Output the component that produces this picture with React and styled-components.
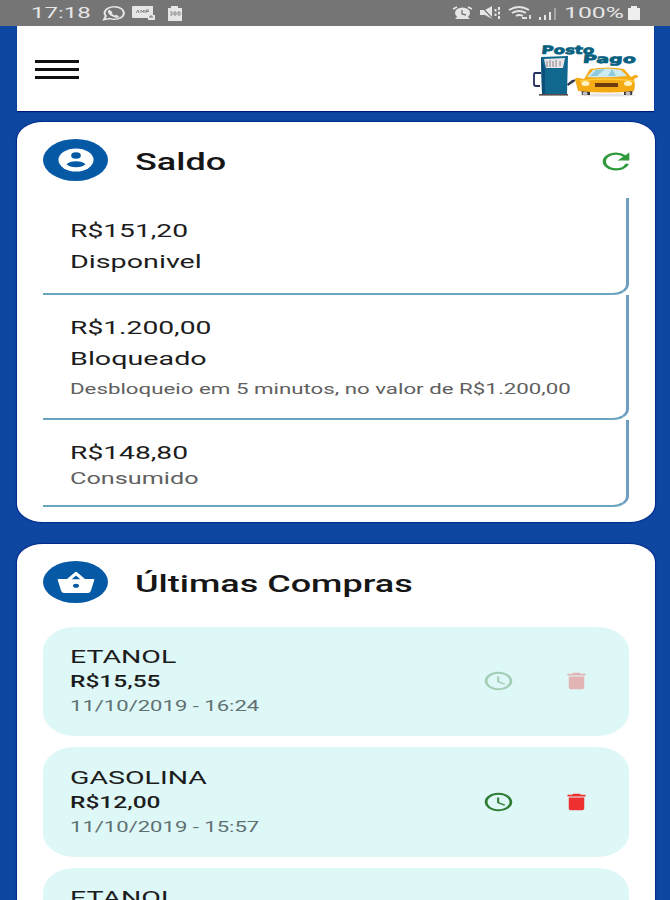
import React from 'react';
import styled, { createGlobalStyle } from 'styled-components';
import { MdAccessTime, MdDelete, MdRefresh } from 'react-icons/md';

const GlobalStyle = createGlobalStyle`
  * {
    box-sizing: border-box;
  }

  body {
    background-color: #0d47a1;
    font-family: Roboto, sans-serif;
    margin: 0;
  }
`;

const Screen = styled.div`
  background-color: #0d47a1;
  height: 900px;
  overflow: hidden;
  width: 670px;
`;

const StatusBar = styled.div`
  align-items: center;
  background-color: #757575;
  color: #e6e6e6;
  display: flex;
  height: 26px;
  justify-content: space-between;
  padding: 0 29px 0 31px;
`;

const StatusGroup = styled.div`
  align-items: center;
  display: flex;
`;

const StatusText = styled.span`
  display: block;
  font-size: 15px;
  line-height: 26px;
  margin-left: ${props => props.$gap || 0}px;
  transform: scaleX(${props => props.$stretch});
  transform-origin: left center;
  white-space: nowrap;
  width: ${props => props.$width}px;
`;

const StatusIcon = styled.svg`
  display: block;
  margin-left: ${props => props.$gap || 0}px;
`;

const Header = styled.header`
  align-items: center;
  background-color: #fff;
  box-shadow: 0 1px 1px #00187c;
  display: flex;
  height: 85px;
  justify-content: space-between;
  margin: 0 16px 11px 17px;
  padding: 0 16px 0 18px;
`;

const MenuButton = styled.button`
  background: none;
  border: none;
  display: grid;
  gap: 5px;
  margin-top: 2px;
  padding: 0;
  width: 44px;
`;

const MenuLine = styled.span`
  background-color: #111;
  height: 3px;
`;

const Card = styled.section`
  background-color: #fff;
  border-radius: 26px / 18px;
  box-shadow: 0 0 1px 1px #04288c;
  height: 400px;
  margin: 0 15px 22px 17px;
  padding: 17px 26px 0;
`;

const CardHeader = styled.div`
  align-items: center;
  display: flex;
  height: 43px;
  margin-bottom: ${props => props.$after}px;
`;

const Badge = styled.div`
  align-items: center;
  background-color: #0559a5;
  border-radius: 50%;
  display: flex;
  height: 42px;
  justify-content: center;
  margin-right: 27px;
  margin-top: -1px;
  width: 65px;
`;

const Title = styled.h2`
  color: #161616;
  flex: 1;
  font-size: 24px;
  font-weight: 500;
  line-height: 43px;
  margin: 4px 0 0;
  transform: scaleX(1.5);
  transform-origin: left center;
  white-space: nowrap;
`;

const RefreshButton = styled.button`
  background: none;
  border: none;
  color: #2e9a3c;
  display: block;
  height: 27px;
  margin-right: -7px;
  margin-top: 1px;
  padding: 0;
`;

const BalanceRow = styled.div`
  border-bottom: 2px solid #6aa5bf;
  border-bottom-right-radius: 16px 11px;
  border-right: 3px solid #6e9fc0;
  height: ${props => props.$height}px;
  padding: 17px 0 0 26.5px;
`;

const Line = styled.p`
  color: ${props => props.$color || '#1c1c1c'};
  font-size: ${props => props.$size || 19}px;
  font-weight: ${props => props.$weight || 400};
  line-height: ${props => props.$line || 31}px;
  margin: 0;
  transform: scaleX(${props => props.$stretch || 1.51});
  transform-origin: left center;
  white-space: nowrap;
  width: 300px;
`;

const PurchaseList = styled.div`
  display: grid;
  gap: 11px;
`;

const Purchase = styled.div`
  align-items: center;
  background-color: #def7f7;
  border-radius: 32px / 24px;
  display: flex;
  height: 109.5px;
  justify-content: space-between;
  padding: 0 37px 0 26.5px;
`;

const PurchaseText = styled.div`
  align-self: flex-start;
  padding-top: 18.5px;
`;

const Actions = styled.div`
  align-items: center;
  display: flex;
  gap: 46px;
  opacity: ${props => (props.$disabled ? 0.33 : 1)};
`;

const ActionIcon = styled.span`
  color: ${props => props.$color};
  display: block;
  height: 22px;
`;

const Icon = ({ as: Glyph, width, height }) => (
  <Glyph
    preserveAspectRatio="none"
    style={{ width, height, display: 'block' }}
  />
);

const AccountIcon = () => (
  <svg width="36" height="24" viewBox="0 0 36 24">
    <ellipse cx="18" cy="12" rx="17.500" ry="11.500" fill="#fff" />
    <ellipse cx="18" cy="7.500" rx="4.800" ry="3.300" fill="#0559a5" />
    <path d="M8.500 16.300q3-3 9.500-3t9.500 3q-3 3-9.500 3t-9.500-3z" fill="#0559a5" />
  </svg>
);

const BasketIcon = () => (
  <svg width="38" height="24" viewBox="0 0 38 24">
    <path d="M1.500 9h8.500L18 2.200q1-.8 2 0L28 9h8.500q1 0 .8 1l-3.500 11q-.6 2-3 2H7.200q-2.400 0-3-2L.7 10q-.2-1 .8-1z" fill="#fff" />
    <path d="M14.800 9.200L19 5.500l4.200 3.700z" fill="#0559a5" />
    <ellipse cx="19" cy="15.800" rx="3" ry="2" fill="#0559a5" />
  </svg>
);

const Logo = () => (
  <svg width="108" height="58" viewBox="530 40 108 58">
    {/* pump */}
    <path d="M541 73h-6q-1 0-1 2v9q0 2 2 2h4" fill="none" stroke="#23305e" strokeWidth="1.8" />
    <path d="M541 57l27-1-1 38h-25z" fill="#10688f" />
    <path d="M541 57l4 12v25h-3z" fill="#0c4f78" />
    <path d="M544 59l21-1-2 10h-17z" fill="#e9e6e8" />
    <path d="M547 61v6M550 60v7M553 61v6M556 60v7M560 61v5" stroke="#9a9298" strokeWidth="1.2" />
    <path d="M539 94h29v1.600h-29z" fill="#5d4a4a" />
    <path d="M567 84l5-4 5-1-3 3-6 4z" fill="#333c50" />
    {/* car */}
    <ellipse cx="607" cy="95" rx="29" ry="1.600" fill="#e4e4e4" />
    <path d="M581 88h9v7h-8zM624 88h9l-1 7h-8z" fill="#3b3340" />
    <path d="M575 80q0-3 4-2l5 1 6-10q18-3 34 0l7 8 4-2q4 0 3 2l-4 2 1 6-1 6q-26 3-56 0l-2-8z" fill="#f5ab14" />
    <path d="M587 77l6-7q13-3 28 0l6 6q-19 2-40 1z" fill="#cdeaf0" />
    <path d="M596 70l9-1-8 7h-7zM612 69l4 7h-8z" fill="#8fcbdc" />
    <path d="M580 81q25-4 54 0" fill="none" stroke="#ffcb3d" strokeWidth="1.500" />
    <ellipse cx="585.500" cy="83.500" rx="4" ry="2.500" fill="#fff3c4" />
    <ellipse cx="628" cy="83.500" rx="4" ry="2.500" fill="#fff3c4" />
    <path d="M595 83h23v4h-23z" fill="#6d3b10" />
    <ellipse cx="585" cy="93.500" rx="2.500" ry="2" fill="#bbb" />
    <ellipse cx="628" cy="93.500" rx="2.500" ry="2" fill="#bbb" />
    <g fill="#08617f" fontFamily="DejaVu Sans" fontSize="11.500" fontWeight="700" stroke="#08617f" strokeWidth="0.700">
      <text transform="translate(541 53.500) skewX(-6)" textLength="53" lengthAdjust="spacingAndGlyphs">Posto</text>
      <text transform="translate(582.500 63) skewX(-6)" textLength="53" lengthAdjust="spacingAndGlyphs">Pago</text>
    </g>
  </svg>
);

const StatusBarContent = () => (
  <StatusBar>
    <StatusGroup>
      <StatusText $stretch={1.6} $width={71}>17:18</StatusText>
      <StatusIcon width="23" height="15" viewBox="0 0 24 24" preserveAspectRatio="none">
        <path d="M2 22l2-6a10 10 0 1 1 4 4z" fill="none" stroke="#e6e6e6" strokeWidth="2.200" />
        <path d="M8 6l3 4-1 2 3 3 2-1 3 3q-2 3-5 1-6-3-7-9 0-2 2-3z" fill="#e6e6e6" />
      </StatusIcon>
      <StatusIcon $gap={7} width="24" height="14" viewBox="0 0 24 14">
        <path d="M1 0h20v9h2v5h-7v-2H1q-1 0-1-1V1q0-1 1-1z" fill="#e6e6e6" />
        <path d="M4 7l2-3 1 3M9 7V4l2 2 1-2v3M14 7V4h3M14 5.500h3" fill="none" stroke="#858585" />
        <path d="M18 12v-2h2v2" fill="none" stroke="#757575" />
      </StatusIcon>
      <StatusIcon $gap={11} width="16" height="15" viewBox="0 0 16 15">
        <path d="M4 2V0h7v2h4v13H1V2z" fill="#e6e6e6" />
        <path d="M3 6h2v3H3M7 6h2v3H7zM11 6h2v3h-2z" fill="none" stroke="#8a8a8a" />
      </StatusIcon>
    </StatusGroup>
    <StatusGroup>
      <StatusIcon width="21" height="14" viewBox="0 0 21 14">
        <path d="M1 3l4-2M20 3l-4-2" stroke="#e6e6e6" strokeWidth="1.800" />
        <ellipse cx="10.500" cy="7" rx="7.500" ry="5.500" fill="#e6e6e6" />
        <path d="M3 13l3-3h9l3 3z" fill="#e6e6e6" />
        <path d="M10 4v4l4 1" fill="none" stroke="#757575" strokeWidth="1.300" />
      </StatusIcon>
      <StatusIcon $gap={7} width="21" height="14" viewBox="0 0 21 14">
        <path d="M0 4h5l7-4v13l-7-4H0z" fill="#e6e6e6" />
        <path d="M1 0l12 13" stroke="#757575" strokeWidth="1.200" />
        <path d="M15.500 3v2.500M15.500 7.500V10M19 1v3M19 5.500v3M19 10v3" fill="none" stroke="#e6e6e6" strokeWidth="2" />
      </StatusIcon>
      <StatusIcon $gap={7} width="25" height="14" viewBox="0 0 25 14">
        <path d="M1 4q10-6 20 0M4 7q7-4 14 0M8 10q3-2 7 0" fill="none" stroke="#e6e6e6" strokeWidth="1.900" />
        <path d="M14 12h5M22 9v4" stroke="#e6e6e6" strokeWidth="1.800" />
      </StatusIcon>
      <StatusIcon $gap={6} width="18" height="13" viewBox="0 0 18 13">
        <path d="M1 13v-3M6 13V8M11 13V5" stroke="#e6e6e6" strokeWidth="2" />
        <path d="M16 13V1" stroke="#a5a5a5" strokeWidth="2" />
      </StatusIcon>
      <StatusText $gap={7} $stretch={1.65} $width={63}>100%</StatusText>
      <StatusIcon width="14" height="14" viewBox="0 0 14 14">
        <path d="M4 2V0h6v2h3v12H1V2z" fill="#efefef" />
      </StatusIcon>
    </StatusGroup>
  </StatusBar>
);

const balances = [
  {
    value: 'R$151,20',
    label: 'Disponivel',
    height: 97,
  },
  {
    value: 'R$1.200,00',
    label: 'Bloqueado',
    note: 'Desbloqueio em 5 minutos, no valor de R$1.200,00',
    height: 125,
  },
  {
    value: 'R$148,80',
    label: 'Consumido',
    height: 87,
    muted: true,
  },
];

const purchases = [
  { id: 1, fuel: 'ETANOL', value: 'R$15,55', date: '11/10/2019 - 16:24', disabled: true },
  { id: 2, fuel: 'GASOLINA', value: 'R$12,00', date: '11/10/2019 - 15:57' },
  { id: 3, fuel: 'ETANOL' },
];

const App = () => {
  return (
    <Screen>
      <GlobalStyle />
      <StatusBarContent />
      <Header>
        <MenuButton aria-label="Menu">
          <MenuLine />
          <MenuLine />
          <MenuLine />
        </MenuButton>
        <Logo />
      </Header>

      <Card>
        <CardHeader $after={16}>
          <Badge>
            <AccountIcon />
          </Badge>
          <Title>Saldo</Title>
          <RefreshButton aria-label="Atualizar">
            <Icon as={MdRefresh} width={40} height={27} />
          </RefreshButton>
        </CardHeader>
        {balances.map(({ value, label, note, height, muted }) => (
          <BalanceRow key={value} $height={height}>
            <Line $stretch={1.485}>{value}</Line>
            {muted ? (
              <Line $size={17} $line={20} $stretch={1.485} $color="#606060">{label}</Line>
            ) : (
              <Line>{label}</Line>
            )}
            {note && <Line $size={14.6} $line={31} $stretch={1.527} $color="#606060">{note}</Line>}
          </BalanceRow>
        ))}
      </Card>

      <Card>
        <CardHeader $after={22.5}>
          <Badge>
            <BasketIcon />
          </Badge>
          <Title>Últimas Compras</Title>
        </CardHeader>
        <PurchaseList>
          {purchases.map(({ id, fuel, value, date, disabled }) => (
            <Purchase key={id}>
              <PurchaseText>
                <Line $line={24} $stretch={1.5}>{fuel}</Line>
                {value && <Line $size={16.8} $line={24} $weight={500} $stretch={1.46}>{value}</Line>}
                {date && <Line $size={14.6} $line={27} $color="#5f7072">{date}</Line>}
              </PurchaseText>
              {value && (
                <Actions $disabled={disabled}>
                  <ActionIcon $color="#2e7d32">
                    <Icon as={MdAccessTime} width={33} height={22} />
                  </ActionIcon>
                  <ActionIcon $color="#ee3030">
                    <Icon as={MdDelete} width={31} height={22} />
                  </ActionIcon>
                </Actions>
              )}
            </Purchase>
          ))}
        </PurchaseList>
      </Card>
    </Screen>
  );
};

export default App;
